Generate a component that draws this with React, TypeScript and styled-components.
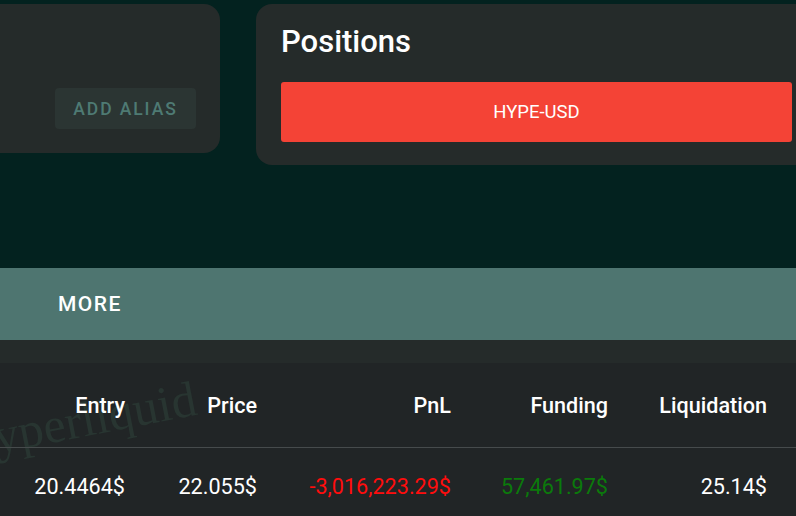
import React from "react";
import styled, { createGlobalStyle } from "styled-components";

const GlobalStyle = createGlobalStyle`
  body {
    margin: 0;
    background: #03221f;
    font-family: Roboto, "Liberation Sans", sans-serif;
    overflow: hidden;
  }
`;

const Page = styled.div`
  width: 796px;
  height: 516px;
  overflow: hidden;
  display: flex;
  flex-direction: column;
`;

const TopRow = styled.div`
  display: flex;
  gap: 36px;
  height: 268px;
  padding-top: 4px;
  margin-left: -40px;
  box-sizing: border-box;
  align-items: flex-start;
`;

const Card = styled.div`
  background: #252b2a;
  border-radius: 16px;
  box-sizing: border-box;
  flex-shrink: 0;
`;

const AliasCard = styled(Card)`
  width: 260px;
  height: 149px;
  display: flex;
  align-items: flex-end;
  justify-content: flex-end;
  padding: 24px;
`;

const AliasButton = styled.button`
  width: 141px;
  height: 41px;
  border: none;
  border-radius: 4px;
  background: #2b3533;
  color: #4e7a73;
  font-family: inherit;
  font-size: 17.5px;
  font-weight: 500;
  letter-spacing: 1.9px;
  text-transform: uppercase;
`;

const PositionsCard = styled(Card)`
  width: 580px;
  height: 161px;
  padding: 21px 25px 0;
  display: flex;
  flex-direction: column;
`;

const Title = styled.h2`
  margin: 0;
  color: #ffffff;
  font-size: 31px;
  line-height: 34px;
  font-weight: 500;
`;

const PairButton = styled.button`
  margin-top: 23px;
  width: 511px;
  height: 60px;
  border: none;
  border-radius: 3px;
  background: #f44336;
  color: #ffffff;
  font-family: inherit;
  font-size: 18.5px;
  font-weight: 400;
`;

const MoreBand = styled.div`
  height: 72px;
  background: #4e7570;
  display: flex;
  align-items: center;
  padding-left: 58px;
  color: #ffffff;
  font-size: 21px;
  font-weight: 500;
  letter-spacing: 1.5px;
`;

const Strip = styled.div`
  height: 23px;
  background: #252b2a;
`;

const TableArea = styled.div`
  flex: 1;
  background: #212526;
  position: relative;
  overflow: hidden;
`;

const Watermark = styled.div`
  position: absolute;
  left: -28px;
  top: 48px;
  font-family: "Liberation Serif", serif;
  font-size: 50px;
  line-height: 50px;
  font-weight: 400;
  color: #283531;
  transform: rotate(-11deg);
  transform-origin: 28px 42px;
  pointer-events: none;
  white-space: nowrap;
`;

const Row = styled.div<{ $head?: boolean }>`
  position: relative;
  display: grid;
  grid-template-columns: 141px 132px 194px 157px 159px;
  height: ${({ $head }) => ($head ? "84px" : "76px")};
  align-items: center;
  border-bottom: ${({ $head }) => ($head ? "1px solid #464b4c" : "none")};
  font-size: 21.6px;
  font-weight: ${({ $head }) => ($head ? 500 : 400)};
`;

const Cell = styled.div<{ $tone?: "neg" | "pos" }>`
  text-align: right;
  padding-right: 16px;
  color: ${({ $tone }) =>
    $tone === "neg" ? "#ff0d0d" : $tone === "pos" ? "#0b7a0b" : "#ffffff"};
  white-space: nowrap;
`;

const headers = ["Entry", "Price", "PnL", "Funding", "Liquidation"];

const position = {
  entry: "20.4464$",
  price: "22.055$",
  pnl: "-3,016,223.29$",
  funding: "57,461.97$",
  liquidation: "25.14$",
};

export default function App() {
  return (
    <Page>
      <GlobalStyle />
      <TopRow>
        <AliasCard>
          <AliasButton>Add Alias</AliasButton>
        </AliasCard>
        <PositionsCard>
          <Title>Positions</Title>
          <PairButton>HYPE-USD</PairButton>
        </PositionsCard>
      </TopRow>
      <MoreBand>MORE</MoreBand>
      <Strip />
      <TableArea>
        <Watermark>hyperliquid</Watermark>
        <Row $head>
          {headers.map((h) => (
            <Cell key={h}>{h}</Cell>
          ))}
        </Row>
        <Row>
          <Cell>{position.entry}</Cell>
          <Cell>{position.price}</Cell>
          <Cell $tone="neg">{position.pnl}</Cell>
          <Cell $tone="pos">{position.funding}</Cell>
          <Cell>{position.liquidation}</Cell>
        </Row>
      </TableArea>
    </Page>
  );
}
